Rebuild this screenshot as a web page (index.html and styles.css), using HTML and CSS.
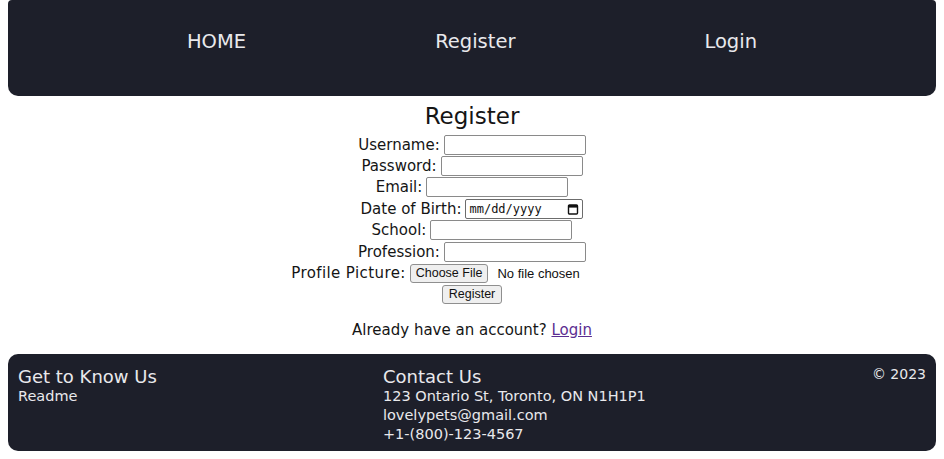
FILE: index.html
```html
<!DOCTYPE html>
<html lang="en">
<head>
<meta charset="utf-8">
<title>Register</title>
<link rel="stylesheet" href="styles.css">
</head>
<body>
<header class="topbar">
  <nav class="nav">
    <a class="nav-link" href="#">HOME</a>
    <a class="nav-link" href="#">Register</a>
    <a class="nav-link" href="#">Login</a>
  </nav>
</header>
<main class="main">
  <h1 class="title">Register</h1>
  <form class="form">
    <div class="row"><label>Username:</label><input class="field" type="text"></div>
    <div class="row"><label>Password:</label><input class="field" type="password"></div>
    <div class="row"><label>Email:</label><input class="field" type="email"></div>
    <div class="row"><label>Date of Birth:</label><span class="date"><span class="date-text">mm/dd/yyyy</span><svg class="cal" width="12" height="12" viewBox="0 0 12 12"><rect x="1.5" y="2" width="9" height="9" rx="1" fill="none" stroke="#111" stroke-width="1.4"/><rect x="1.5" y="2" width="9" height="2.6" fill="#111"/></svg></span></div>
    <div class="row"><label>School:</label><input class="field" type="text"></div>
    <div class="row"><label>Profession:</label><input class="field" type="text"></div>
    <div class="row"><label class="wide">Profile Picture:</label><span class="file"><button class="btn" type="button">Choose File</button><span class="file-name">No file chosen</span></span></div>
    <div class="row"><button class="btn" type="button">Register</button></div>
  </form>
  <p class="already">Already have an account? <a class="link" href="#">Login</a></p>
</main>
<footer class="footer">
  <div class="fcol">
    <h3 class="fhead">Get to Know Us</h3>
    <div class="fline">Readme</div>
  </div>
  <div class="fcol">
    <h3 class="fhead">Contact Us</h3>
    <div class="fline">123 Ontario St, Toronto, ON N1H1P1</div>
    <div class="fline">lovelypets@gmail.com</div>
    <div class="fline">+1-(800)-123-4567</div>
  </div>
  <div class="fcol copy">© 2023</div>
</footer>
</body>
</html>
```
FILE: styles.css
```css
* { box-sizing: border-box; }
html, body { background: #ffffff; }
body {
  margin: 0 8px 8px;
  font-family: "DejaVu Sans", "Noto Sans", sans-serif;
  color: #151515;
}
.topbar {
  background: #1d1f2a;
  height: 96px;
  border-radius: 4px 4px 10px 10px;
  display: flex;
  align-items: center;
}
.nav {
  display: flex;
  width: 100%;
  justify-content: center;
  gap: 189px;
  padding-bottom: 14px;
}
.nav-link {
  color: #e9e9ec;
  text-decoration: none;
  font-size: 19.5px;
}
.main {
  height: 258px;
  padding-top: 5px;
  text-align: center;
}
.title {
  margin: 0;
  font-size: 23px;
  font-weight: normal;
  line-height: 30px;
}
.form {
  display: flex;
  flex-direction: column;
  margin: 3px 0 0;
}
.row {
  height: 21.4px;
  display: flex;
  justify-content: center;
  align-items: center;
  gap: 4px;
  font-size: 15px;
}
.wide { letter-spacing: 0.4px; }
.field {
  width: 142px;
  height: 20px;
  border: 1px solid #8a8a8a;
  border-radius: 2px;
  margin: 0;
  padding: 0 2px;
  background: #fff;
}
.date {
  width: 118px;
  height: 20px;
  border: 1px solid #6c6c6c;
  border-radius: 2px;
  display: flex;
  align-items: center;
  justify-content: space-between;
  padding: 0 3px 0 3px;
}
.date-text {
  font-family: "DejaVu Sans Mono", "Liberation Mono", monospace;
  font-size: 12px;
  color: #111;
}
.cal { display: block; }
.file {
  width: 243px;
  display: flex;
  align-items: center;
  gap: 9px;
}
.btn {
  font-family: "Liberation Sans", Arial, sans-serif;
  font-size: 12.5px;
  height: 19px;
  padding: 0 6px;
  border: 1px solid #8f8f8f;
  border-radius: 3px;
  background: #efefef;
  color: #111;
  margin: 0;
}
.file .btn { padding: 0 5px; }
.file-name {
  font-family: "Liberation Sans", Arial, sans-serif;
  font-size: 13px;
  color: #111;
}
.already {
  margin: 16px 0 0;
  font-size: 15px;
}
.link { color: #5b2d91; }
.footer {
  background: #1d1f2a;
  height: 97px;
  border-radius: 10px;
  color: #e9e9ec;
  display: flex;
  justify-content: space-between;
  padding: 12px 10px 0;
}
.fhead {
  margin: 0;
  font-size: 18px;
  font-weight: normal;
  line-height: 21px;
}
.fline {
  font-size: 14.5px;
  line-height: 19px;
}
.copy {
  font-size: 14px;
  line-height: 19px;
  margin-top: -1px;
}
```
